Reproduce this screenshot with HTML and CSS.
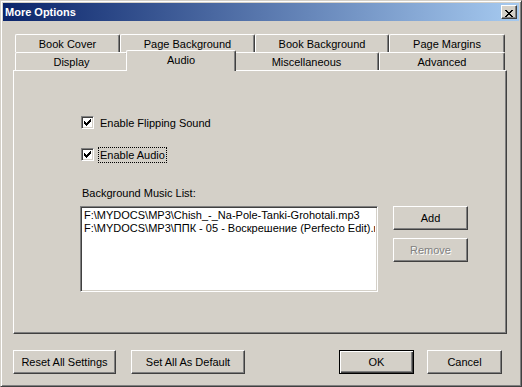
FILE: index.html
```html
<!DOCTYPE html>
<html lang="en">

<head>
    <meta charset="UTF-8">
    <title>More Options</title>
    <link rel="stylesheet" href="styles.css">
</head>

<body>

    <div class="window">
        <!-- title bar -->
        <div class="titlebar">
            <span class="title">More Options</span>
            <button class="close-btn">
                <svg width="8" height="7" viewBox="0 0 8 7" shape-rendering="crispEdges">
                    <path fill="#000" d="M0 0h2v1h-2z M6 0h2v1h-2z M1 1h2v1h-2z M5 1h2v1h-2z M2 2h4v1h-4z M3 3h2v1h-2z M2 4h4v1h-4z M1 5h2v1h-2z M5 5h2v1h-2z M0 6h2v1h-2z M6 6h2v1h-2z"/>
                </svg>
            </button>
        </div>

        <div class="client">
            <!-- tabs -->
            <div class="tabs">
                <div class="tab-row">
                    <div class="tab tab-cover">Book Cover</div>
                    <div class="tab tab-pagebg">Page Background</div>
                    <div class="tab tab-bookbg">Book Background</div>
                    <div class="tab tab-margins">Page Margins</div>
                </div>
                <div class="tab-row">
                    <div class="tab tab-display">Display</div>
                    <div class="tab tab-audio active">Audio</div>
                    <div class="tab tab-misc">Miscellaneous</div>
                    <div class="tab tab-advanced">Advanced</div>
                </div>
            </div>

            <!-- Audio page -->
            <div class="panel">
                <div class="section">
                    <label class="check">
                        <span class="check-box">
                            <svg width="7" height="7" viewBox="0 0 7 7" shape-rendering="crispEdges">
                                <path fill="#000" d="M6 0h1v1h-1z M5 1h2v1h-2z M0 2h1v1h-1z M4 2h3v1h-3z M0 3h2v1h-2z M3 3h3v1h-3z M0 4h5v1h-5z M1 5h3v1h-3z M2 6h1v1h-1z"/>
                            </svg>
                        </span>
                        <span class="check-text">Enable Flipping Sound</span>
                    </label>
                    <label class="check">
                        <span class="check-box">
                            <svg width="7" height="7" viewBox="0 0 7 7" shape-rendering="crispEdges">
                                <path fill="#000" d="M6 0h1v1h-1z M5 1h2v1h-2z M0 2h1v1h-1z M4 2h3v1h-3z M0 3h2v1h-2z M3 3h3v1h-3z M0 4h5v1h-5z M1 5h3v1h-3z M2 6h1v1h-1z"/>
                            </svg>
                        </span>
                        <span class="check-text focused">Enable Audio</span>
                    </label>

                    <div class="list-label">Background Music List:</div>
                    <div class="list-row">
                        <div class="listbox">
                            <div class="list-item">F:\MYDOCS\MP3\Chish_-_Na-Pole-Tanki-Grohotali.mp3</div>
                            <div class="list-item">F:\MYDOCS\MP3\ППК - 05 - Воскрешение (Perfecto Edit).mp3</div>
                        </div>
                        <div class="list-buttons">
                            <button class="btn">Add</button>
                            <button class="btn" disabled>Remove</button>
                        </div>
                    </div>
                </div>
            </div>

            <!-- dialog buttons -->
            <div class="footer">
                <div class="btn-group">
                    <button class="btn btn-reset">Reset All Settings</button>
                    <button class="btn btn-default-all">Set All As Default</button>
                </div>
                <div class="btn-group">
                    <button class="btn default">OK</button>
                    <button class="btn">Cancel</button>
                </div>
            </div>
        </div>
    </div>

</body>

</html>
```

FILE: styles.css
```css
body {
    margin: 0;
    padding: 0;
    font-family: 'Liberation Sans', Arial, sans-serif;
    font-size: 11px;
    color: #000;
    background-color: #d4d0c8;
    overflow: hidden;
}

.window {
    width: 522px;
    height: 387px;
    box-sizing: border-box;
    padding: 2px;
    background-color: #d4d0c8;
    border: 1px solid;
    border-color: #d4d0c8 #404040 #404040 #d4d0c8;
    box-shadow: inset 1px 1px #fff, inset -1px -1px #808080;
}

.titlebar {
    height: 18px;
    display: flex;
    align-items: center;
    justify-content: space-between;
    padding-left: 2px;
    background: linear-gradient(to right, #0a246a, #a6caf0);
}

.title {
    color: #fff;
    font-weight: bold;
    font-size: 11px;
    line-height: 18px;
}

.close-btn {
    width: 16px;
    height: 14px;
    margin-right: 2px;
    padding: 2px 0 0 3px;
    box-sizing: border-box;
    background-color: #d4d0c8;
    border: 1px solid;
    border-color: #fff #404040 #404040 #fff;
    box-shadow: inset -1px -1px #808080;
}

.close-btn svg {
    display: block;
}

.client {
    padding: 13px 12px 0 10px;
}

/* tabs */
.tabs {
    width: 494px;
    box-sizing: border-box;
    padding: 0 2px;
}

.tab-row {
    display: flex;
    align-items: flex-start;
    height: 18px;
}

.tab {
    height: 18px;
    box-sizing: border-box;
    padding-top: 2px;
    line-height: 15px;
    text-align: center;
    white-space: nowrap;
    background-color: #d4d0c8;
    border-top: 1px solid #fff;
    border-left: 1px solid #fff;
    border-right: 1px solid #404040;
    border-radius: 2px 2px 0 0;
    box-shadow: inset -1px 0 #808080;
}

.tab-cover { width: 105px; }
.tab-pagebg { width: 135px; }
.tab-bookbg { width: 134px; }
.tab-margins { width: 116px; }

.tab-display { width: 113px; }
.tab-audio { width: 106px; }
.tab-misc { width: 145px; }
.tab-advanced { width: 126px; }

.tab.active {
    position: relative;
    z-index: 1;
    width: 110px;
    height: 21px;
    margin: -2px -2px 0 -2px;
}

/* page */
.panel {
    width: 494px;
    height: 264px;
    box-sizing: border-box;
    border: 1px solid;
    border-color: #fff #404040 #404040 #fff;
    box-shadow: inset -1px -1px #808080;
}

.section {
    padding: 45px 0 0 66px;
}

.check {
    display: flex;
    align-items: flex-start;
    height: 14px;
    margin-left: 1px;
}

.check + .check {
    margin-top: 18px;
}

.check-box {
    width: 13px;
    height: 13px;
    box-sizing: border-box;
    display: flex;
    align-items: center;
    justify-content: center;
    background-color: #fff;
    border: 1px solid;
    border-color: #808080 #fff #fff #808080;
    box-shadow: inset 1px 1px #404040, inset -1px -1px #d4d0c8;
}

.check-box svg {
    display: block;
}

.check-text {
    margin-left: 5px;
    padding: 0 1px;
    line-height: 14px;
}

.focused {
    outline: 1px dotted #000;
}

.list-label {
    margin: 25px 0 0 2px;
    line-height: 13px;
}

.list-row {
    display: flex;
    align-items: flex-start;
    margin-top: 6px;
}

.listbox {
    width: 298px;
    height: 86px;
    box-sizing: border-box;
    padding: 2px 2px 0 3px;
    overflow: hidden;
    background-color: #fff;
    border: 1px solid;
    border-color: #808080 #fff #fff #808080;
    box-shadow: inset 1px 1px #404040, inset -1px -1px #d4d0c8;
}

.list-item {
    line-height: 13px;
    white-space: nowrap;
    overflow: hidden;
}

.list-buttons {
    display: flex;
    flex-direction: column;
    gap: 8px;
    margin-left: 15px;
}

/* buttons */
.btn {
    width: 75px;
    height: 24px;
    box-sizing: border-box;
    padding: 0;
    font: inherit;
    color: #000;
    background-color: #d4d0c8;
    border: 1px solid;
    border-color: #fff #404040 #404040 #fff;
    box-shadow: inset -1px -1px #808080;
}

.btn:disabled {
    color: #808080;
    text-shadow: 1px 1px #fff;
}

.btn.default {
    border-color: #000;
    box-shadow: inset 1px 1px #fff, inset -1px -1px #404040, inset -2px -2px #808080;
}

.btn-reset {
    width: 103px;
}

.btn-default-all {
    width: 114px;
}

.footer {
    display: flex;
    justify-content: space-between;
    margin-top: 16px;
    padding-right: 5px;
}

.btn-group {
    display: flex;
    gap: 13px;
}

.btn-group:first-child {
    gap: 15px;
}
```
